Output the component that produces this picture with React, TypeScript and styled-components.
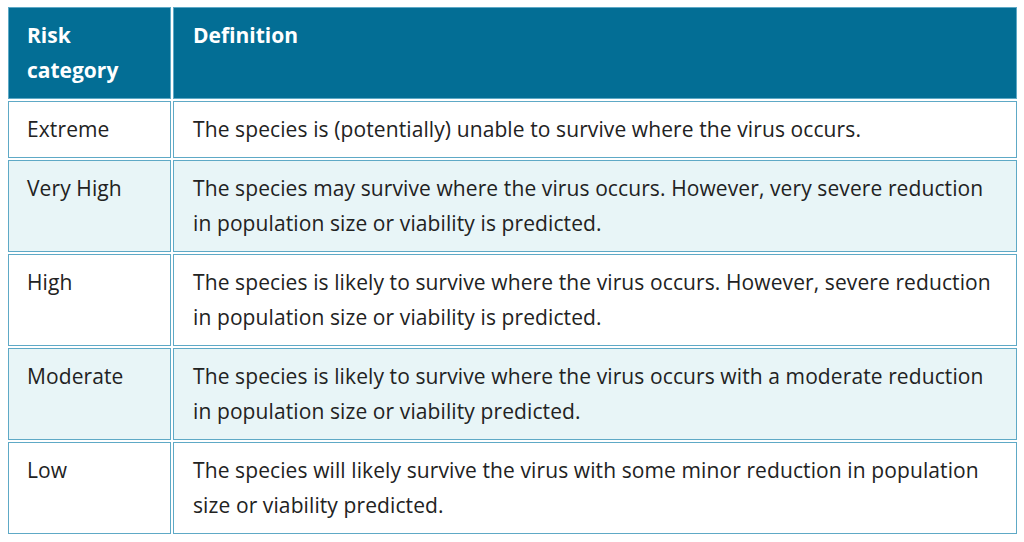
import React from "react";
import styled, { createGlobalStyle } from "styled-components";

const Global = createGlobalStyle`
  html, body { margin: 0; padding: 0; background: #ffffff; }
  body { font-family: "Open Sans", "Noto Sans", sans-serif; }
`;

const Table = styled.table`
  border-collapse: separate;
  border-spacing: 2px;
  margin: 5px 0 0 6px;
  width: 1013px;
  table-layout: fixed;
  font-family: "Open Sans", "Noto Sans", sans-serif;
  font-size: 21px;
  letter-spacing: 0.1px;
  line-height: 35px;
  color: #222222;
`;

const HeadCell = styled.th<{ $first?: boolean }>`
  background: #036e95;
  color: #ffffff;
  font-weight: 700;
  letter-spacing: 0;
  text-align: left;
  vertical-align: top;
  border: 1px solid #5ea9c6;
  padding: 10px ${(p) => (p.$first ? "18px" : "19px")};
  width: ${(p) => (p.$first ? "125px" : "auto")};
`;

const Row = styled.tr<{ $shaded?: boolean }>`
  background: ${(p) => (p.$shaded ? "#e8f5f7" : "#ffffff")};
`;

const Cell = styled.td<{ $first?: boolean }>`
  border: 1px solid #5ea9c6;
  vertical-align: top;
  padding: 10px ${(p) => (p.$first ? "18px" : "19px")};
`;

const rows = [
  ["Extreme", "The species is (potentially) unable to survive where the virus occurs."],
  [
    "Very High",
    "The species may survive where the virus occurs. However, very severe reduction in population size or viability is predicted.",
  ],
  [
    "High",
    "The species is likely to survive where the virus occurs. However, severe reduction in population size or viability is predicted.",
  ],
  [
    "Moderate",
    "The species is likely to survive where the virus occurs with a moderate reduction in population size or viability predicted.",
  ],
  [
    "Low",
    "The species will likely survive the virus with some minor reduction in population size or viability predicted.",
  ],
];

export default function App() {
  return (
    <>
      <Global />
      <Table>
        <thead>
          <tr>
            <HeadCell $first>Risk category</HeadCell>
            <HeadCell>Definition</HeadCell>
          </tr>
        </thead>
        <tbody>
          {rows.map(([cat, def], i) => (
            <Row key={cat} $shaded={i % 2 === 1}>
              <Cell $first>{cat}</Cell>
              <Cell>{def}</Cell>
            </Row>
          ))}
        </tbody>
      </Table>
    </>
  );
}
